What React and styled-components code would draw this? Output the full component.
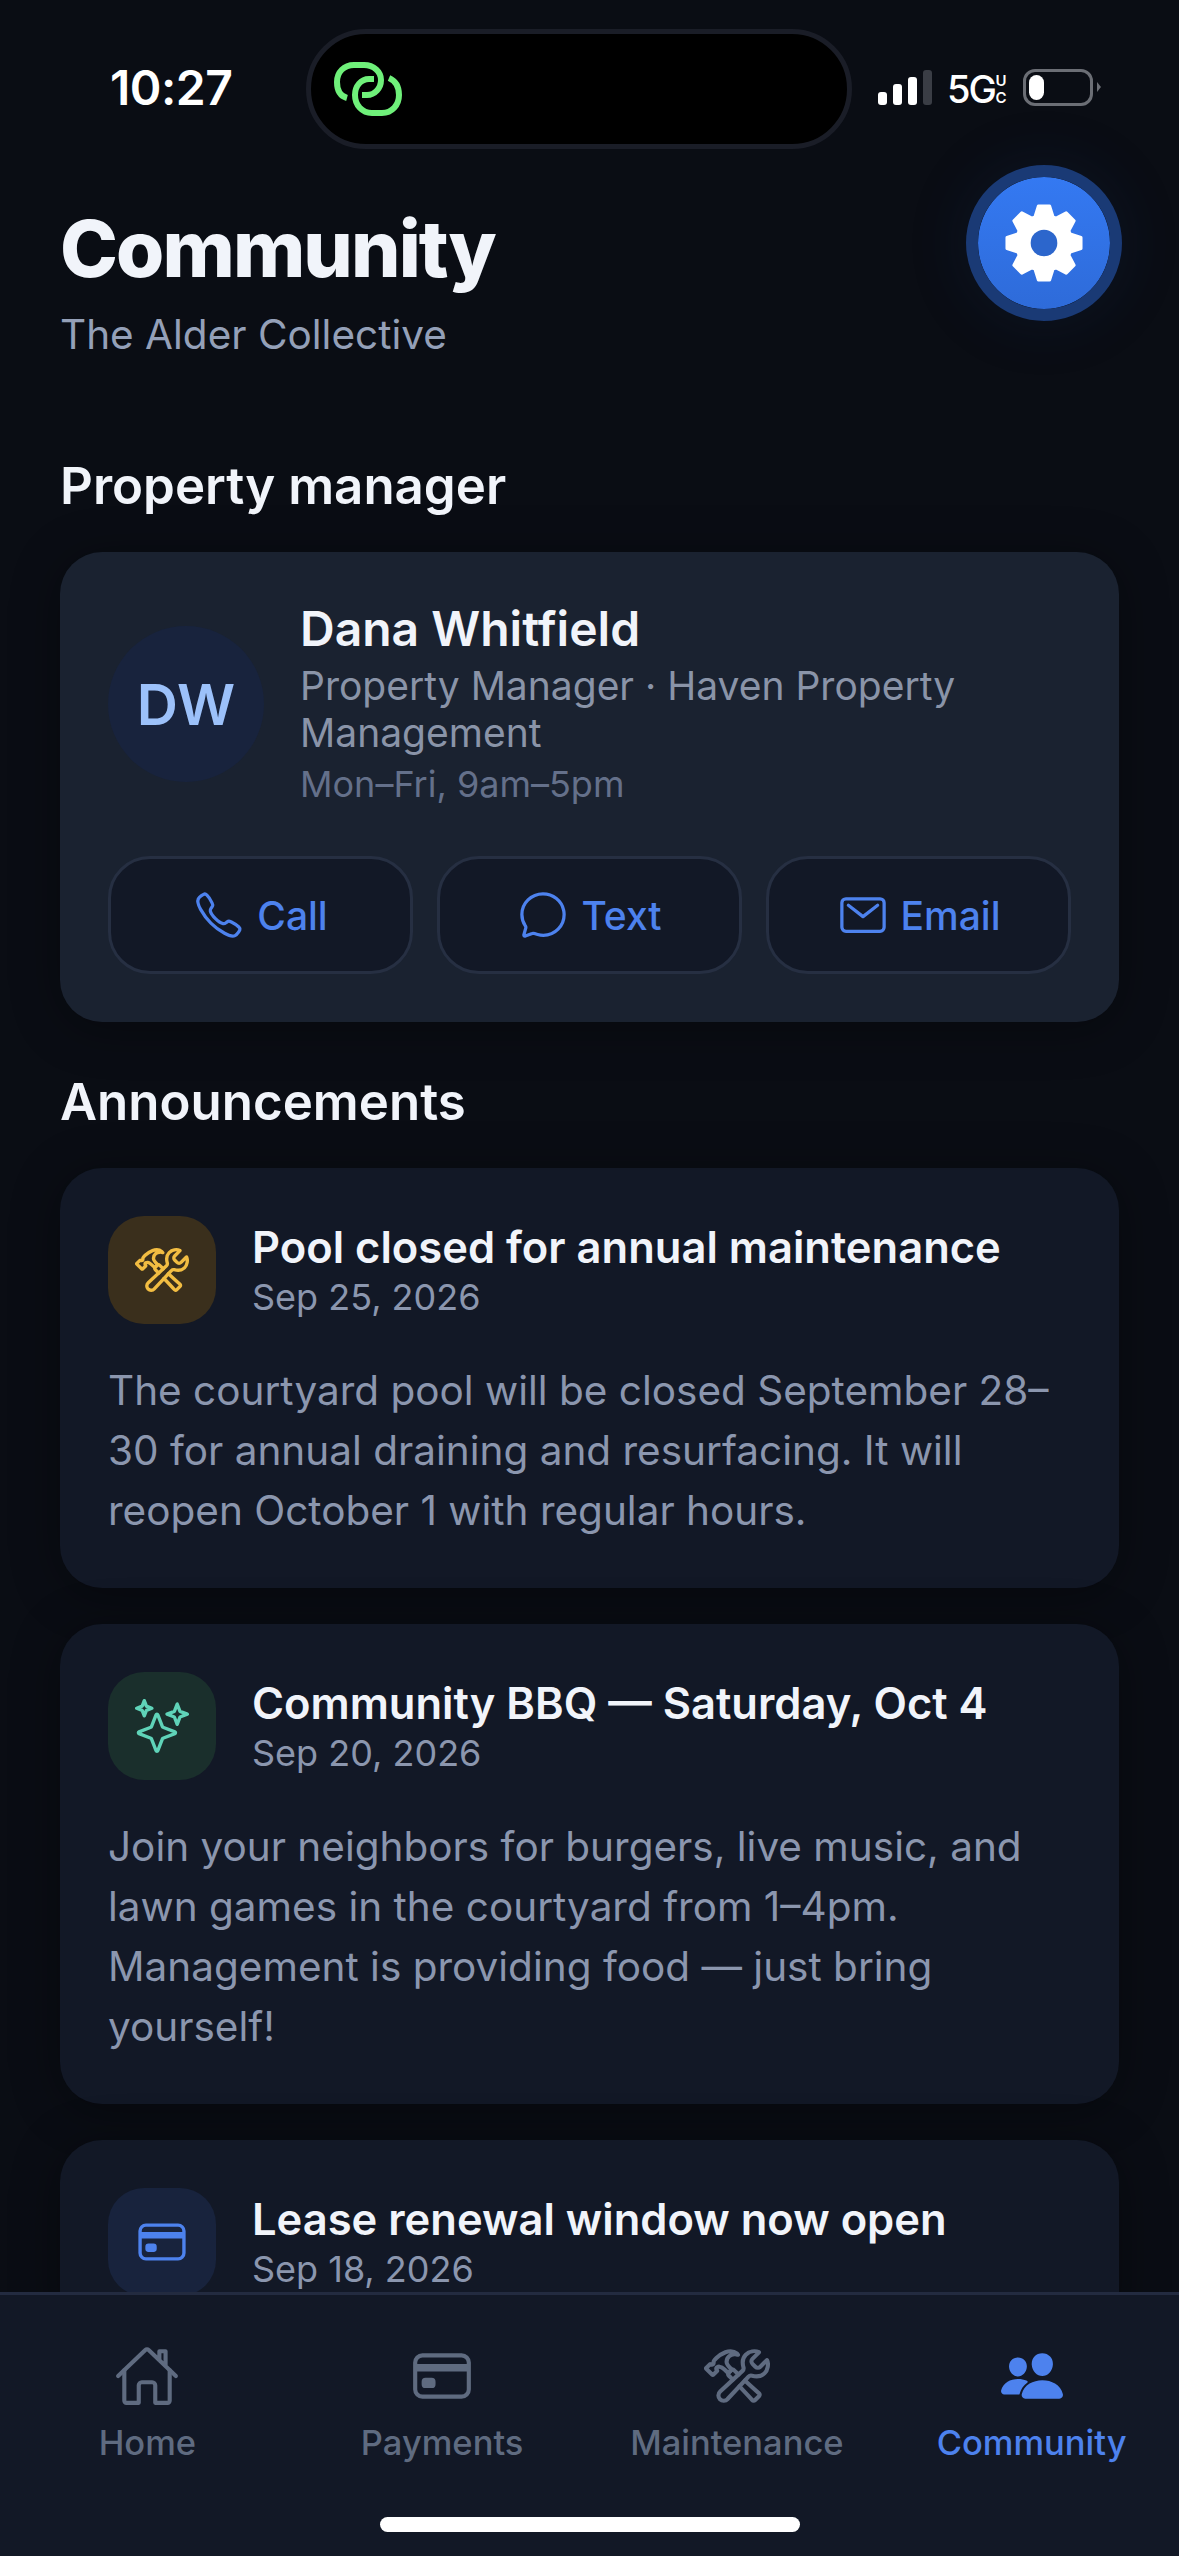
import React from "react";
import styled, { createGlobalStyle } from "styled-components";
import {
  IoCallOutline,
  IoCardOutline,
  IoChatbubbleOutline,
  IoConstructOutline,
  IoHomeOutline,
  IoMailOutline,
  IoPeople,
  IoSparklesOutline,
} from "react-icons/io5";

//STYLES
const GlobalStyle = createGlobalStyle`
  html, body {
    margin: 0;
    padding: 0;
    background: #0a0d14;
  }
  * {
    box-sizing: border-box;
  }
`;

const Screen = styled.div`
  width: 1179px;
  height: 2556px;
  position: relative;
  display: flex;
  flex-direction: column;
  overflow: hidden;
  background: #0a0d14;
  font-family: Inter, "Noto Sans", sans-serif;
  color: #f1f4fa;
`;

const Scroll = styled.main`
  flex: 1;
  min-height: 0;
  overflow: hidden;
`;

const StatusBar = styled.div`
  height: 165px;
  padding: 66px 78px 0 110px;
  display: flex;
  align-items: flex-start;
  justify-content: space-between;
`;

const Clock = styled.span`
  font-size: 48px;
  line-height: 44px;
  font-weight: 600;
  color: #fff;
  letter-spacing: -0.5px;
`;

const Island = styled.div`
  position: absolute;
  left: 306px;
  top: 29px;
  width: 546px;
  height: 120px;
  border-radius: 60px;
  background: #000;
  border: 5px solid #1a1d27;
  padding: 28px 0 0 23px;
`;

const StatusRight = styled.div`
  display: flex;
  align-items: flex-end;
  height: 37px;
  margin-top: 3px;
`;

const Signal = styled.div`
  display: flex;
  align-items: flex-end;
  gap: 6px;
  height: 35px;
  margin: 0 15px 1px 0;
`;

const SignalBar = styled.i`
  display: block;
  width: 9px;
  height: ${(p) => p.$h}px;
  border-radius: 3px;
  background: ${(p) => (p.$off ? "#3a3d45" : "#fff")};
`;

const Net = styled.span`
  width: 43px;
  white-space: nowrap;
  font-size: 38px;
  line-height: 34px;
  font-weight: 500;
  color: #fff;
  letter-spacing: -2px;
`;

const NetSub = styled.span`
  width: 12px;
  display: flex;
  flex-direction: column;
  align-items: center;
  margin: 0 16px 0 5px;
  font-size: 15px;
  line-height: 17px;
  font-weight: 600;
  color: #fff;
`;

const Battery = styled.div`
  width: 70px;
  height: 37px;
  border: 3px solid #6b6e75;
  border-radius: 12px;
  padding: 3px;
`;

const BatteryFill = styled.div`
  width: 15px;
  height: 25px;
  border-radius: 8px;
  background: #fff;
`;

const BatteryNub = styled.div`
  width: 0;
  height: 0;
  margin: 0 0 14px 4px;
  border-left: 4px solid #6b6e75;
  border-top: 5px solid transparent;
  border-bottom: 5px solid transparent;
`;

const Header = styled.header`
  display: flex;
  align-items: flex-start;
  justify-content: space-between;
  padding: 0 57px 0 60px;
`;

const TitleBlock = styled.div`
  padding-top: 33px;
`;

const PageTitle = styled.h1`
  margin: 0;
  font-size: 78px;
  line-height: 102px;
  font-weight: 800;
  letter-spacing: -1.9px;
  color: #f1f4fa;
`;

const PageSub = styled.p`
  margin: 9px 0 0;
  font-size: 40.5px;
  line-height: 51px;
  color: #94a0b8;
`;

const GearButton = styled.button`
  width: 156px;
  height: 156px;
  padding: 0;
  border: 12px solid #1a3a75;
  border-radius: 50%;
  background: linear-gradient(180deg, #3479f2 0%, #2e6bd9 100%);
  background-clip: padding-box;
  display: flex;
  align-items: center;
  justify-content: center;
  box-shadow: 0 0 60px rgba(20, 50, 110, 0.18);
`;

const Section = styled.section`
  padding: 0 60px;
`;

const SectionTitle = styled.h2`
  margin: ${(p) => p.$top}px 0 35px;
  font-size: 51px;
  line-height: 62px;
  font-weight: 600;
  color: #f1f4fa;
`;

const ManagerCard = styled.div`
  background: #1a2230;
  border-radius: 42px;
  padding: 48px;
  box-shadow: 0 6px 48px rgba(0, 0, 0, 0.35);
`;

const ManagerRow = styled.div`
  display: flex;
  align-items: center;
  gap: 36px;
`;

const Avatar = styled.div`
  flex: none;
  width: 156px;
  height: 156px;
  border-radius: 50%;
  background: #18233d;
  color: #9cc1fa;
  font-size: 57px;
  font-weight: 600;
  display: flex;
  align-items: center;
  justify-content: center;
`;

const ManagerName = styled.div`
  font-size: 48px;
  line-height: 58px;
  font-weight: 600;
  color: #f1f4fa;
`;

const ManagerRole = styled.div`
  margin-top: 4px;
  font-size: 39px;
  line-height: 47px;
  color: #8a94a8;
`;

const ManagerHours = styled.div`
  margin-top: 5px;
  font-size: 36px;
  line-height: 47px;
  color: #64708a;
`;

const Actions = styled.div`
  display: grid;
  grid-template-columns: repeat(3, 1fr);
  gap: 24px;
  margin-top: 48px;
`;

const ActionButton = styled.button`
  height: 118px;
  background: #121826;
  border: 3px solid #262f42;
  border-radius: 42px;
  color: #4d82ee;
  font-family: inherit;
  font-size: 39px;
  font-weight: 500;
  display: flex;
  align-items: center;
  justify-content: center;
  gap: 12px;
  svg {
    font-size: 52px;
  }
`;

const Cards = styled.div`
  display: flex;
  flex-direction: column;
  gap: 36px;
`;

const NoticeCard = styled.article`
  background: #121826;
  border-radius: 42px;
  padding: 48px 48px 47px;
  box-shadow: 0 6px 48px rgba(0, 0, 0, 0.35);
`;

const NoticeHead = styled.div`
  display: flex;
  align-items: center;
  gap: 36px;
`;

const NoticeTile = styled.div`
  flex: none;
  width: 108px;
  height: 108px;
  border-radius: 36px;
  background: ${(p) => p.$bg};
  color: ${(p) => p.$fg};
  font-size: 54px;
  display: flex;
  align-items: center;
  justify-content: center;
`;

const NoticeTitle = styled.div`
  font-size: 43.5px;
  line-height: 54px;
  font-weight: 600;
  color: #f1f4fa;
`;

const NoticeDate = styled.div`
  font-size: 36px;
  line-height: 47px;
  color: #8b96ae;
`;

const NoticeBody = styled.p`
  margin: 37px 0 0;
  font-size: 40.5px;
  line-height: 60px;
  color: #8b96ae;
`;

const TabBar = styled.nav`
  flex: none;
  height: 264px;
  position: relative;
  display: flex;
  align-items: flex-start;
  padding-top: 48px;
  background: #121826;
  border-top: 3px solid #232b40;
`;

const Tab = styled.div`
  flex: 1;
  display: flex;
  flex-direction: column;
  align-items: center;
  gap: 12px;
  color: ${(p) => (p.$active ? "#4d82ee" : "#5f6b80")};
  font-size: 34.5px;
  line-height: 44px;
  font-weight: 500;
  svg {
    font-size: 66px;
  }
`;

const HomeIndicator = styled.div`
  position: absolute;
  left: 380px;
  bottom: 24px;
  width: 420px;
  height: 15px;
  border-radius: 8px;
  background: #fff;
`;

const LinkGlyph = () => (
  <svg width="68" height="54" viewBox="0 0 68 54" fill="none" stroke="#6ff07a" strokeWidth="6">
    <path d="M13 36C6 34 3 28 3 20C3 10 10 3 20 3H30C40 3 47 10 47 18C47 26 41 33 33 33H28" />
    <path d="M55 16C62 19 65 25 65 33C65 43 58 51 48 51H38C28 51 21 43 21 33C21 24 27 17 35 17H40" />
  </svg>
);

// eight tooth cog, outline built from tooth angles
const cogPath = () => {
  const point = (radius, angle) =>
    `${(40 + radius * Math.sin(angle)).toFixed(2)} ${(40 - radius * Math.cos(angle)).toFixed(2)}`;
  const parts = [];
  for (let i = 0; i < 8; i += 1) {
    const a = (i * Math.PI) / 4;
    parts.push(point(27, a - 0.33), point(36.5, a - 0.15), point(36.5, a + 0.15), point(27, a + 0.33));
  }
  return `M${parts.join("L")}Z`;
};

const CogIcon = () => (
  <svg width="82" height="82" viewBox="0 0 80 80">
    <path d={cogPath()} fill="#fff" stroke="#fff" strokeWidth="3" strokeLinejoin="round" />
    <circle cx="40" cy="40" r="13" fill="#2c66cc" />
  </svg>
);

const notices = [
  {
    title: "Pool closed for annual maintenance",
    date: "Sep 25, 2026",
    body: "The courtyard pool will be closed September 28–30 for annual draining and resurfacing. It will reopen October 1 with regular hours.",
    icon: <IoConstructOutline />,
    bg: "#3a2f1c",
    fg: "#f2bd42",
  },
  {
    title: "Community BBQ — Saturday, Oct 4",
    date: "Sep 20, 2026",
    body: "Join your neighbors for burgers, live music, and lawn games in the courtyard from 1–4pm. Management is providing food — just bring yourself!",
    icon: <IoSparklesOutline />,
    bg: "#1a2f2c",
    fg: "#5fd3b8",
  },
  {
    title: "Lease renewal window now open",
    date: "Sep 18, 2026",
    icon: <IoCardOutline />,
    bg: "#18233d",
    fg: "#4d82ee",
  },
];

const tabs = [
  { label: "Home", icon: <IoHomeOutline /> },
  { label: "Payments", icon: <IoCardOutline /> },
  { label: "Maintenance", icon: <IoConstructOutline /> },
  { label: "Community", icon: <IoPeople />, active: true },
];

const App = () => {
  return (
    <Screen>
      <GlobalStyle />
      <Scroll>
        <StatusBar>
          <Clock>10:27</Clock>
          <StatusRight>
            <Signal>
              <SignalBar $h={13} />
              <SignalBar $h={21} />
              <SignalBar $h={28} />
              <SignalBar $h={35} $off />
            </Signal>
            <Net>5G</Net>
            <NetSub>
              <span>U</span>
              <span>C</span>
            </NetSub>
            <Battery>
              <BatteryFill />
            </Battery>
            <BatteryNub />
          </StatusRight>
        </StatusBar>
        <Island>
          <LinkGlyph />
        </Island>

        <Header>
          <TitleBlock>
            <PageTitle>Community</PageTitle>
            <PageSub>The Alder Collective</PageSub>
          </TitleBlock>
          <GearButton aria-label="Settings">
            <CogIcon />
          </GearButton>
        </Header>

        <Section>
          <SectionTitle $top={95}>Property manager</SectionTitle>
          <ManagerCard>
            <ManagerRow>
              <Avatar>DW</Avatar>
              <div>
                <ManagerName>Dana Whitfield</ManagerName>
                <ManagerRole>Property Manager · Haven Property Management</ManagerRole>
                <ManagerHours>Mon–Fri, 9am–5pm</ManagerHours>
              </div>
            </ManagerRow>
            <Actions>
              <ActionButton>
                <IoCallOutline />
                Call
              </ActionButton>
              <ActionButton>
                <IoChatbubbleOutline />
                Text
              </ActionButton>
              <ActionButton>
                <IoMailOutline />
                Email
              </ActionButton>
            </Actions>
          </ManagerCard>

          <SectionTitle $top={49}>Announcements</SectionTitle>
          <Cards>
            {notices.map((notice) => (
              <NoticeCard key={notice.title}>
                <NoticeHead>
                  <NoticeTile $bg={notice.bg} $fg={notice.fg}>
                    {notice.icon}
                  </NoticeTile>
                  <div>
                    <NoticeTitle>{notice.title}</NoticeTitle>
                    <NoticeDate>{notice.date}</NoticeDate>
                  </div>
                </NoticeHead>
                {notice.body && <NoticeBody>{notice.body}</NoticeBody>}
              </NoticeCard>
            ))}
          </Cards>
        </Section>
      </Scroll>
      <TabBar>
        {tabs.map((tab) => (
          <Tab key={tab.label} $active={tab.active}>
            {tab.icon}
            {tab.label}
          </Tab>
        ))}
        <HomeIndicator />
      </TabBar>
    </Screen>
  );
};

export default App;
